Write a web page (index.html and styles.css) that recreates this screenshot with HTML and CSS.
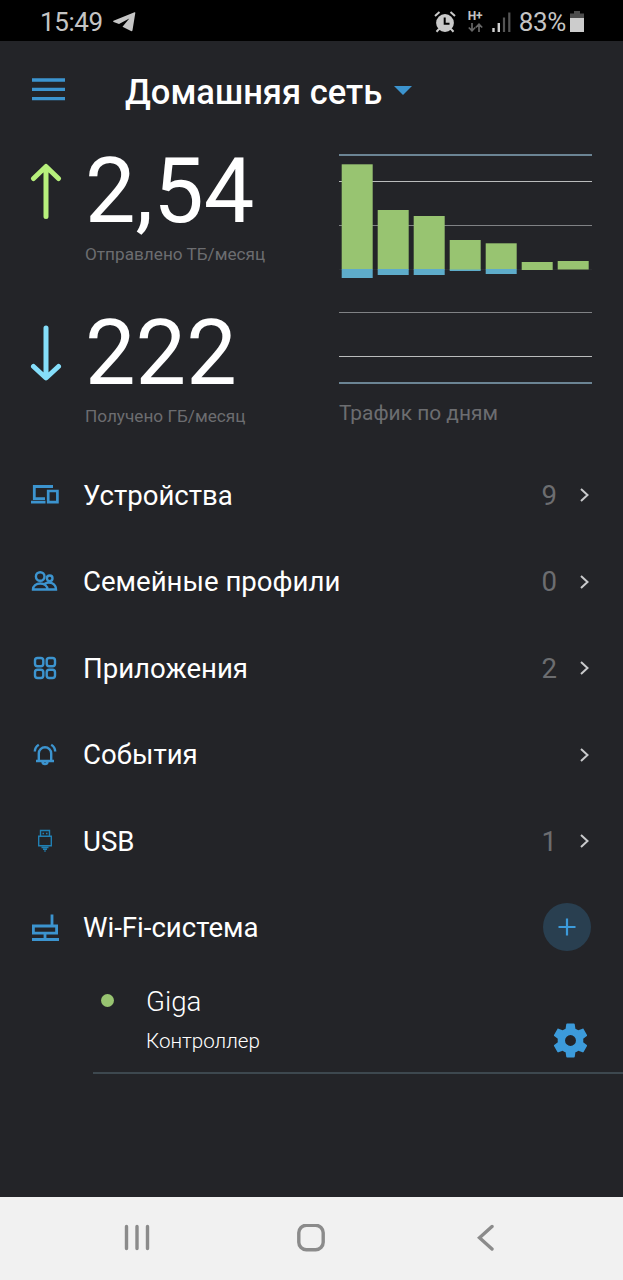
FILE: index.html
```html
<!DOCTYPE html>
<html lang="ru">
<head>
  <meta charset="UTF-8">
  <title>Домашняя сеть</title>
  <link rel="stylesheet" href="styles.css">
</head>
<body>
<div class="statusbar">
  <span class="time">15:49</span>
  <svg class="telegram" width="23" height="20" viewBox="0 0 23 20"><path d="M.5 8.800 21.500.3q1-.3.800.8L19.500 18.300q-.3 1.200-1.500.7L9.500 14.800l6.800-8.300L6 12 .6 10q-1-.6-.1-1.200z" fill="#c6c6c6"/></svg>
  <div class="status-icons">
    <svg width="22" height="22" viewBox="0 0 22 22"><circle cx="11" cy="12" r="8.900" fill="#c9c9c9"/><path d="M1 5 5.500 1M21 5l-4.500-4M5 18l-2.500 2.700M17 18l2.500 2.700" stroke="#c9c9c9" stroke-width="2" fill="none"/><path d="M10.700 6.500v6.200h4.800" stroke="#000" stroke-width="2" fill="none"/></svg>
    <div class="net">
      <span>H+</span>
      <svg width="15" height="9" viewBox="0 0 15 9"><path d="M4 0v7.500M.8 4.500 4 7.800l3.200-3.300M11 9V1.200M7.800 4.500 11 1.200l3.200 3.300" stroke="#666" stroke-width="1.700" fill="none"/></svg>
    </div>
    <svg class="signal" width="19" height="20" viewBox="0 0 19 20"><path d="M1.500 16v4M6.800 11v9" stroke="#d0d0d0" stroke-width="2.400"/><path d="M12 5.500V20M17.300.5V20" stroke="#555" stroke-width="2.200"/></svg>
    <span class="percent">83%</span>
    <svg width="14" height="21" viewBox="0 0 14 21"><path d="M4 0h6v2.500h4V7H0V2.500h4z" fill="#4c4c4c"/><path d="M0 7h14v14H0z" fill="#ccc"/></svg>
  </div>
</div>

<div class="header">
  <svg class="burger" width="33" height="23" viewBox="0 0 33 23"><path d="M0 2h33M0 11.300h33M0 20.600h33" stroke="#3c94cf" stroke-width="3.300"/></svg>
  <h1>Домашняя сеть</h1>
  <svg class="caret" width="18" height="9" viewBox="0 0 18 9"><path d="M0 0h18L9 9z" fill="#3c94cf"/></svg>
</div>

<div class="stats">
  <div class="totals">
    <div class="total">
      <svg width="32" height="58" viewBox="0 0 32 58"><path d="M16 54.500V5M3.500 16.500 16 4.500l12.500 12" stroke="#b7f07c" stroke-width="5" stroke-linecap="round" stroke-linejoin="round" fill="none"/></svg>
      <div>
        <div class="number">2,54</div>
        <div class="caption">Отправлено ТБ/месяц</div>
      </div>
    </div>
    <div class="total">
      <svg width="32" height="58" viewBox="0 0 32 58"><path d="M16 4v49.500M3.500 42.500 16 54l12.500-11.500" stroke="#85defa" stroke-width="5" stroke-linecap="round" stroke-linejoin="round" fill="none"/></svg>
      <div>
        <div class="number">222</div>
        <div class="caption">Получено ГБ/месяц</div>
      </div>
    </div>
  </div>
  <div class="traffic">
    <svg width="253" height="232" viewBox="0 0 253 232">
      <g fill="#808285">
        <rect y="1" width="253" height="2" fill="#6b8494"/>
        <rect y="28" width="253" height="1" fill="#babcbd"/>
        <rect y="72" width="253" height="1"/>
        <rect y="116" width="253" height="1" fill="#2c2d31"/>
        <rect y="159" width="253" height="1"/>
        <rect y="203" width="253" height="1" fill="#babcbd"/>
        <rect y="229" width="253" height="2" fill="#6b8494"/>
      </g>
      <g fill="#98c471">
        <rect x="2.700" y="11.300" width="31" height="105"/>
        <rect x="38.700" y="57" width="31" height="59.500"/>
        <rect x="74.700" y="63" width="31" height="53.500"/>
        <rect x="110.700" y="87" width="31" height="30"/>
        <rect x="146.700" y="90.300" width="31" height="26"/>
        <rect x="182.700" y="109" width="31" height="8"/>
        <rect x="218.700" y="108" width="31" height="8.500"/>
      </g>
      <g fill="#5eacca">
        <rect x="2.700" y="116" width="31" height="9"/>
        <rect x="38.700" y="116" width="31" height="6"/>
        <rect x="74.700" y="116" width="31" height="6"/>
        <rect x="110.700" y="116.500" width="31" height="1.500"/>
        <rect x="146.700" y="116" width="31" height="5"/>
      </g>
    </svg>
    <div class="traffic-caption">Трафик по дням</div>
  </div>
</div>

<div class="menu">
  <div class="item">
    <svg class="icon" viewBox="0 0 30 30"><path d="M23 6.500H4.300v12.200H15M1 22.200h14.500" stroke-width="2.800"/><path d="M18.200 11h9.200v11.200h-9.200z" stroke-width="2.700"/></svg>
    <span class="name">Устройства</span><span class="count">9</span>
    <svg class="chevron" viewBox="0 0 9 14"><path d="M1 1l6.500 6L1 13"/></svg>
  </div>
  <div class="item">
    <svg class="icon" viewBox="0 0 30 30"><circle cx="10.200" cy="9.500" r="4.300"/><circle cx="19.700" cy="11.300" r="2.800"/><path d="M3 22.500c0-3.500 3.200-6 7.200-6s7.300 2.500 7.300 6zM14.500 17c5-3.500 11.500-.3 11.500 5.500h-8.500"/></svg>
    <span class="name">Семейные профили</span><span class="count">0</span>
    <svg class="chevron" viewBox="0 0 9 14"><path d="M1 1l6.500 6L1 13"/></svg>
  </div>
  <div class="item">
    <svg class="icon" viewBox="0 0 30 30"><rect x="5" y="5" width="8.300" height="8.300" rx="2.500"/><rect x="16.700" y="5" width="8.300" height="8.300" rx="2.500"/><rect x="5" y="16.700" width="8.300" height="8.300" rx="2.500"/><rect x="16.700" y="16.700" width="8.300" height="8.300" rx="2.500"/></svg>
    <span class="name">Приложения</span><span class="count">2</span>
    <svg class="chevron" viewBox="0 0 9 14"><path d="M1 1l6.500 6L1 13"/></svg>
  </div>
  <div class="item">
    <svg class="icon" viewBox="0 0 30 30"><path d="M6 21h18M8.800 21v-7.500a6.200 6.200 0 0 1 12.400 0V21M12.500 21.500q0 2.500 2.500 2.500t2.500-2.500M8.800 4.800Q5 7 4.800 11.500M21.200 4.800Q25 7 25.200 11.500"/></svg>
    <span class="name">События</span>
    <svg class="chevron" viewBox="0 0 9 14"><path d="M1 1l6.500 6L1 13"/></svg>
  </div>
  <div class="item">
    <svg class="icon usb" viewBox="0 0 30 30"><path d="M10.500 10.200V4.500h9v5.700M8.700 10.200h12.600v9.500H8.700zM12.500 7.500h1.500M16 7.500h1.500M11.500 21.500h7M13 23.300h4M14.300 25h1.400"/></svg>
    <span class="name">USB</span><span class="count">1</span>
    <svg class="chevron" viewBox="0 0 9 14"><path d="M1 1l6.500 6L1 13"/></svg>
  </div>
  <div class="item">
    <svg class="icon" viewBox="0 0 30 30"><path d="M3.400 13h23.200v7.200H3.400zM22 1.500v11M2 26.500h27M15 20.500v6" stroke-width="2.800"/></svg>
    <span class="name">Wi-Fi-система</span>
    <div class="add"><svg width="18" height="18" viewBox="0 0 18 18"><path d="M9 .5v17M.5 9h17" stroke="#3c9bdb" stroke-width="2.200"/></svg></div>
  </div>
</div>

<div class="node">
  <span class="dot"></span>
  <div class="node-text">
    <div class="node-name">Giga</div>
    <div class="node-role">Контроллер</div>
  </div>
  <svg class="gear" width="41" height="41" viewBox="0 0 24 24"><path fill="#3c9bdb" d="M19.430 12.980c.04-.32.07-.64.07-.98s-.03-.66-.07-.98l2.110-1.650c.19-.15.24-.42.12-.64l-2-3.460c-.12-.22-.39-.3-.61-.22l-2.490 1c-.52-.4-1.080-.73-1.690-.98l-.38-2.650C14.460 2.180 14.250 2 14 2h-4c-.25 0-.46.18-.49.42l-.38 2.650c-.61.25-1.170.59-1.690.98l-2.490-1c-.23-.09-.49 0-.61.22l-2 3.460c-.13.22-.07.49.12.64l2.110 1.650c-.04.32-.07.65-.07.98s.03.66.07.98l-2.110 1.650c-.19.15-.24.42-.12.64l2 3.460c.12.22.39.3.61.22l2.490-1c.52.4 1.080.73 1.690.98l.38 2.650c.03.24.24.42.49.42h4c.25 0 .46-.18.49-.42l.38-2.650c.61-.25 1.170-.59 1.690-.98l2.490 1c.23.09.49 0 .61-.22l2-3.460c.12-.22.07-.49-.12-.64l-2.110-1.650zM12 15.200A3.200 3.200 0 1 1 12 8.800a3.200 3.200 0 0 1 0 6.400z"/></svg>
</div>

<div class="navbar">
  <svg width="26" height="28" viewBox="0 0 26 28"><path d="M2.500 2.500v22M13 2.500v22M23.500 2.500v22"/></svg>
  <svg class="home" width="28" height="28" viewBox="0 0 28 28"><rect x="1.800" y="1.300" width="24.400" height="24.400" rx="7.500"/></svg>
  <svg width="18" height="28" viewBox="0 0 18 28"><path d="M15 2.500 2.500 13.700 15 25"/></svg>
</div>
</body>
</html>
```
FILE: styles.css
```css
* { box-sizing: border-box; }
body { margin: 0; height: 1280px; background: #232428; color: #fff; font-family: Roboto, sans-serif; display: flex; flex-direction: column; overflow: hidden; }
svg { display: block; flex: none; }

.statusbar { height: 41px; background: #000; color: #c4c4c4; display: flex; align-items: center; padding: 2px 39px 0 40px; font-size: 26px; }
.time { width: 73px; letter-spacing: -0.4px; }
.status-icons { display: flex; align-items: center; margin-left: auto; }
.net { width: 15px; margin: 0 9px 0 12px; font-size: 12px; font-weight: bold; line-height: 11px; }
.net svg { margin-top: 1px; }
.percent { margin: 0 4px 0 8px; letter-spacing: -0.3px; }

.header { height: 100px; display: flex; align-items: center; padding: 0 32px; }
.burger { margin-bottom: 3px; }
.header h1 { margin: 1px 0 0 60px; font-size: 34.500px; font-weight: 500; line-height: 40px; }
.caret { margin: 0 0 2px 12px; }

.stats { height: 311px; display: flex; padding: 5px 31px 0 30px; justify-content: space-between; }
.totals { display: flex; flex-direction: column; gap: 41.500px; }
.total { height: 120px; display: flex; gap: 21px; }
.total svg { margin-top: 16px; }
.number { margin-left: 2px; font-size: 90px; line-height: 92px; }
.caption { margin: 4px 0 0 2px; font-size: 17.200px; line-height: 24px; color: #6c6d70; }
.traffic { padding-top: 7px; }
.traffic-caption { margin-top: 16px; font-size: 20.900px; line-height: 24px; color: #6c6d70; }

.item { height: 86.500px; display: flex; align-items: center; padding: 0 34px 0 30px; font-size: 27.600px; }
.icon { width: 30px; height: 30px; fill: none; stroke: #3c94cf; stroke-width: 2.400; }
.usb { stroke: #2180b4; stroke-width: 1.400; }
.name { margin-left: 23px; }
.count { margin-left: auto; color: #6c6d70; }
.chevron { width: 9px; height: 14px; margin-left: 23px; fill: none; stroke: #c9cacc; stroke-width: 2; }
.name + .chevron { margin-left: auto; }
.add { width: 48px; height: 48px; margin: 0 -2px 2px auto; border-radius: 50%; background: #293f50; display: flex; align-items: center; justify-content: center; }

.node { height: 103px; margin-left: 93px; padding: 0 32px 0 8px; border-bottom: 2px solid #3d484f; display: flex; font-weight: 300; }
.dot { width: 13px; height: 13px; margin-top: 23px; border-radius: 50%; background: #98c471; }
.node-text { margin-left: 32px; padding-top: 15px; }
.node-name { font-size: 27.700px; line-height: 32px; }
.node-role { margin-top: 9px; font-size: 20.600px; line-height: 28px; }
.gear { margin: 49px 0 0 auto; }

.navbar { height: 83px; margin-top: auto; background: #f1f1f1; display: flex; align-items: center; justify-content: space-between; padding: 0 128px 2px 124px; }
.navbar svg { fill: none; stroke: #8b8b8b; stroke-width: 3.400; stroke-linecap: round; }
.navbar .home { margin-right: 5px; }
```
